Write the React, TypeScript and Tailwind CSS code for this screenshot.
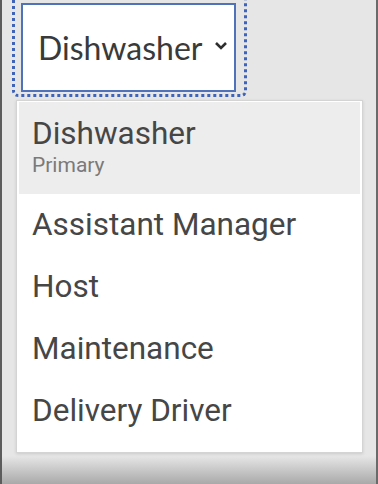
import React from 'react'

const roles = ['Assistant Manager', 'Host', 'Maintenance', 'Delivery Driver']

const App: React.FC = () => {
  return (
    <div className="w-[378px] h-[484px] overflow-hidden border-l-[2px] border-r-[2px] border-l-[#5c5c5c] border-r-[#6a6a6a] bg-[linear-gradient(to_bottom,#e6e6e6_456px,#a9a9a9_484px)]">
      {/* 선택 버튼 + 포커스 링 */}
      <div className="ml-[10px] -mt-[6px] w-[235px] h-[103px] rounded-[6px] border-[3px] border-dotted border-[#3f63b8] pl-[6px] pt-[6px]">
        <button className="flex items-center w-[215px] h-[89px] bg-white border-[2px] border-[#4f72b8] pl-[15px] text-[#3a3a3a] font-['Lato',sans-serif] text-[32px]">
          <span>Dishwasher</span>
          <svg width="14" height="9" viewBox="0 0 14 9" className="ml-[12px] mt-[-4px]">
            <path d="M2 2 L7 7 L12 2" fill="none" stroke="#2e2e2e" strokeWidth="2.6" />
          </svg>
        </button>
      </div>

      {/* 드롭다운 메뉴 */}
      <div className="ml-[14px] mt-[3px] w-[347px] bg-white border border-[#d4d4d4] shadow-[0_1px_3px_rgba(0,0,0,0.12)] pt-[1px] pb-[10px] font-['Roboto',sans-serif] text-[#444]">
        <div className="mx-[2px] bg-[#ededed] pl-[13px] pt-[14px] pb-[16px]">
          <div className="text-[31.5px] leading-[36px] text-[#464646]">Dishwasher</div>
          <div className="text-[21px] leading-[26px] text-[#7a7a7a]">Primary</div>
        </div>
        {roles.map(role => (
          <div key={role} className="pl-[15px] h-[62px] flex items-center text-[31.5px] text-[#464646]">
            {role}
          </div>
        ))}
      </div>
    </div>
  )
}

export default App
